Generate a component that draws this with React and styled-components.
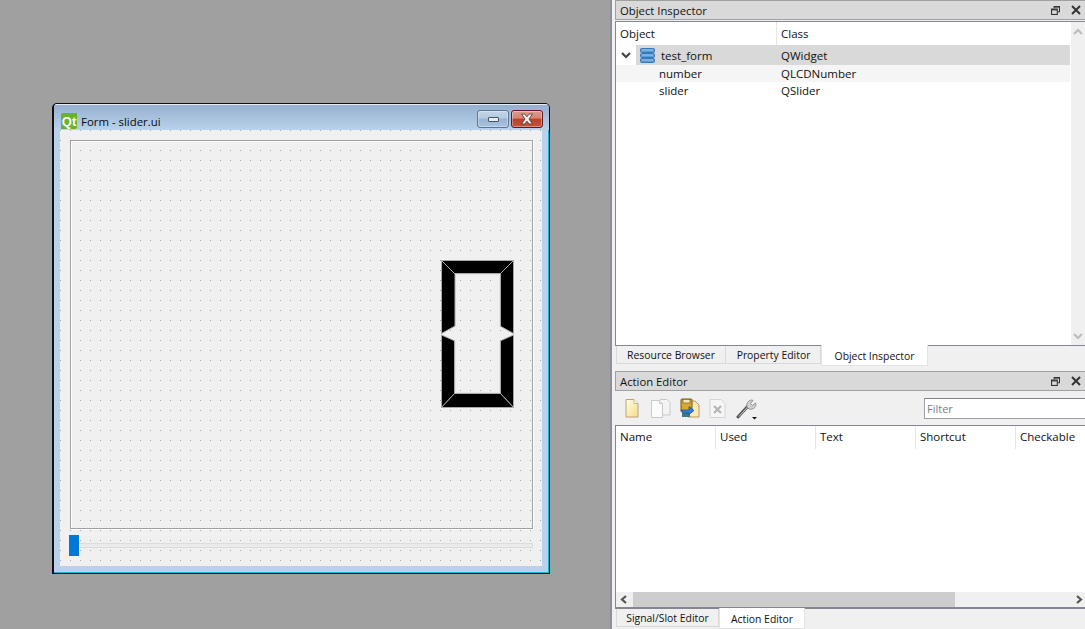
import React from "react";
import styled, { createGlobalStyle, css } from "styled-components";

const Global = createGlobalStyle`
  html, body { margin: 0; padding: 0; height: 100%; overflow: hidden; background: #a0a0a0; }
  #root { height: 100%; }
  * { box-sizing: border-box; }
`;

const Page = styled.div`
  display: grid;
  grid-template-columns: 610px 475px;
  width: 1085px;
  height: 629px;
  overflow: hidden;
  font-family: "Open Sans", "Noto Sans", sans-serif;
  font-size: 11.5px;
  color: #111;
`;

const Desktop = styled.main`
  position: relative;
  background: #a0a0a0;
`;

const Window = styled.section`
  position: absolute;
  left: 52px;
  top: 103px;
  width: 498px;
  height: 471px;
  display: flex;
  flex-direction: column;
  padding: 0 1px 1px 1px;
  border: 1px solid #101010;
  border-left-width: 2px;
  border-radius: 5px 5px 0 0;
  background: #b9d1ea;
  box-shadow: inset -1px -1px 0 #17b5d8;
  overflow: hidden;
`;

const TitleBar = styled.header`
  display: flex;
  align-items: flex-start;
  height: 26px;
  margin: 0 -1px;
  padding: 5px 6px 0 7px;
  border-top: 1px solid #e4ecf4;
  background: linear-gradient(#95b1cf, #bad2eb);
`;

const QtLogo = styled.span`
  display: flex;
  align-items: center;
  justify-content: center;
  width: 16px;
  height: 16px;
  margin-top: 3px;
  background: #67b32b;
  border-radius: 2px 0 2px 0;
  color: #fff;
  font: bold 13px "Liberation Sans", sans-serif;
`;

const WindowTitle = styled.span`
  flex: 1;
  margin: 4px 0 0 4px;
  font-size: 11.4px;
  line-height: 16px;
  color: #0a0a0a;
`;

const CaptionButton = styled.button`
  display: flex;
  align-items: center;
  justify-content: center;
  width: 32px;
  height: 18px;
  margin: 0 0 0 ${(p) => (p.$close ? 2 : 0)}px;
  padding: 0;
  border-radius: 3px;
  border: 1px solid ${(p) => (p.$close ? "#5c1a2c" : "#5f7491")};
  background: ${(p) =>
    p.$close
      ? "linear-gradient(#dc9c8c 0, #d58470 45%, #b8412a 50%, #c4553b 100%)"
      : "linear-gradient(#c3d5e8 0, #b4cae0 45%, #99b4d2 50%, #a8c2de 100%)"};
  box-shadow: inset 0 0 0 1px rgba(255, 255, 255, 0.35);
`;

const MinGlyph = styled.span`
  width: 11px;
  height: 5px;
  margin-top: 1px;
  background: #e8edf2;
  border: 1px solid #44546a;
  border-radius: 1px;
`;

const Client = styled.div`
  flex: 1;
  display: flex;
  flex-direction: column;
  margin: 0 6px 6px 5px;
  padding: 10px 9px 10px 9px;
  background-color: #f0f0f0;
  background-image: conic-gradient(at 1px 1px, transparent 270deg, #a6a6a6 270deg);
  background-size: 10px 10px;
  background-position: 0 0;
`;

const LayoutFrame = styled.div`
  flex: 1;
  display: flex;
  align-items: center;
  justify-content: flex-end;
  margin-left: 1px;
  padding-right: 17px;
  border: 1px solid #a0a0a0;
  box-shadow: 1px 1px 0 #fff, inset 1px 1px 0 #fff;
`;

const Slider = styled.div`
  display: flex;
  align-items: flex-start;
  height: 21px;
  margin-top: 6px;
`;

const SliderHandle = styled.span`
  width: 10px;
  height: 21px;
  background: #0078d7;
`;

const SliderGroove = styled.span`
  flex: 1;
  height: 5px;
  margin-top: 8px;
  background: #e9ece9;
  border: 1px solid #d9dcd9;
  border-left: 0;
`;

const Side = styled.aside`
  display: flex;
  flex-direction: column;
  min-width: 0;
  overflow: hidden;
  padding-left: 3px;
  background: #f0f0f0;
  border-left: 2px solid #8e8e9a;
`;

const DockTitle = styled.header`
  display: flex;
  align-items: center;
  flex: none;
  height: 20px;
  padding: 0 0 0 4px;
  background: #d9d9d9;
  border: 1px solid #a0a0a0;
  border-width: 1px 0 1px 1px;
  font-size: 11.3px;
`;

const DockName = styled.span`
  flex: 1;
  margin-top: 1px;
`;

const DockButtons = styled.span`
  display: flex;
  align-items: center;
  gap: 11px;
  padding-right: 4px;
`;

const TreeFrame = styled.div`
  display: flex;
  flex: none;
  height: 325px;
  margin-top: 1px;
  border: 1px solid #828790;
  border-right: 0;
  background: #fff;
`;

const TreeBody = styled.div`
  flex: 1;
  min-width: 0;
  display: flex;
  flex-direction: column;
`;

const TreeRow = styled.div`
  display: grid;
  grid-template-columns: 161px 1fr;
  align-items: center;
  height: ${(p) => p.$h}px;
  background: ${(p) => p.$bg || "transparent"};
`;

const HeaderCell = styled.div`
  align-self: stretch;
  display: flex;
  align-items: center;
  padding: 0 0 1px 4px;
  border-right: 1px solid #e5e5e5;
`;

const Cell = styled.span`
  padding-left: ${(p) => p.$indent || 4}px;
`;

const RootCell = styled.div`
  display: flex;
  align-items: center;
  height: 100%;
`;

const Branch = styled.span`
  display: flex;
  align-items: center;
  justify-content: center;
  width: 20px;
  height: 100%;
  background: #fff;
`;

const RootItem = styled.div`
  flex: 1;
  display: flex;
  align-items: center;
  gap: 6px;
  height: 100%;
  padding-left: 4px;
`;

const VScroll = styled.div`
  display: flex;
  flex: none;
  flex-direction: column;
  justify-content: space-between;
  align-items: center;
  width: 15px;
  padding: 6px 0 4px;
  background: #f0f0f0;
  border-left: 1px solid #fff;
`;

const Tabs = styled.nav`
  display: flex;
  flex: none;
  align-items: flex-start;
  height: ${(p) => p.$h}px;
  padding-left: 1px;
`;

const Tab = styled.span`
  display: flex;
  align-items: center;
  justify-content: center;
  width: ${(p) => p.$w}px;
  font-size: 10.4px;
  ${(p) =>
    p.$active
      ? css`
          height: 21px;
          margin-top: -1px;
          padding-top: 1px;
          background: #fff;
          border: 1px solid #e3e3e3;
          border-top: 0;
        `
      : css`
          height: 18px;
          background: #f0f0f0;
          border: 1px solid #d9d9d9;
          border-top: 0;
          border-left-color: ${p.$first ? "#d9d9d9" : "transparent"};
        `}
`;

const Toolbar = styled.div`
  display: flex;
  flex: none;
  align-items: center;
  height: 34px;
  padding: 0 0 0 10px;
`;

const ToolIcon = styled.span`
  display: flex;
  width: ${(p) => p.$w}px;
  margin-right: ${(p) => p.$gap}px;
`;

const Filter = styled.div`
  width: 161px;
  height: 21px;
  margin-left: auto;
  padding: 2px 0 0 2px;
  background: #fff;
  border: 1px solid #9a9fa6;
  border-top-color: #7f848c;
  border-right: 0;
  color: #808080;
  font-size: 11px;
  line-height: 16px;
`;

const TableFrame = styled.div`
  display: flex;
  flex: none;
  flex-direction: column;
  height: 184px;
  background: #fff;
  border: 1px solid #828790;
  border-width: 1px 0 2px 1px;
`;

const TableHead = styled.div`
  display: flex;
  height: 23px;
  overflow: hidden;
`;

const HeadCol = styled.div`
  display: flex;
  flex: none;
  align-items: center;
  width: 100px;
  padding: 0 0 2px 4px;
  border-right: 1px solid #e5e5e5;
`;

const TableBody = styled.div`
  flex: 1;
`;

const HScroll = styled.div`
  display: flex;
  align-items: center;
  height: 15px;
  background: #f0f0f0;
`;

const ScrollEnd = styled.span`
  display: flex;
  flex: none;
  align-items: center;
  justify-content: center;
  width: ${(p) => p.$w}px;
  height: 100%;
`;

const ScrollThumb = styled.span`
  width: 322px;
  height: 100%;
  background: #cdcdcd;
`;

const ScrollRest = styled.span`
  flex: 1;
`;

const FloatIcon = () => (
  <svg width="9" height="9" viewBox="0 0 10 10" fill="none" stroke="#333" strokeWidth="1.2">
    <path d="M3.5 2.5V.6h6v5.8H7.5" />
    <path d="M3.5 1.2h6" />
    <rect x=".6" y="3.4" width="6.4" height="6" />
    <path d="M.6 4.2h6.4" strokeWidth="1.4" />
  </svg>
);

const CloseIcon = () => (
  <svg width="10" height="10" viewBox="0 0 10 10" stroke="#333" strokeWidth="2" fill="none">
    <path d="M1 1l8 8M9 1l-8 8" />
  </svg>
);

const Chevron = ({ d, color = "#bdbdbd" }) => (
  <svg width="10" height="9" viewBox="0 0 10 9" fill="none" stroke={color} strokeWidth="2.2">
    <path d={d} />
  </svg>
);

const WidgetIcon = () => (
  <svg width="15" height="15" viewBox="0 0 15 15">
    {[0, 5, 10].map((y) => (
      <g key={y}>
        <rect x=".5" y={y + 0.5} width="14" height="4" rx="1" fill="#5a9ad6" stroke="#3a78b5" />
        <rect x="2" y={y + 1.5} width="11" height="1" fill="#9cc8ee" />
      </g>
    ))}
  </svg>
);

const NewFileIcon = () => (
  <svg width="14" height="21" viewBox="0 0 14 21">
    <defs>
      <linearGradient id="nf" x1="0" x2="1" y1="0" y2="1">
        <stop offset="0" stopColor="#fffde2" />
        <stop offset="1" stopColor="#f4dc8a" />
      </linearGradient>
    </defs>
    <path d="M1 1.5h8l4 4v13.5H1z" fill="url(#nf)" stroke="#b9a277" />
    <path d="M9 1.5v4h4" fill="#fff" stroke="#c6b48c" />
  </svg>
);

const CopyIcon = () => (
  <svg width="21" height="21" viewBox="0 0 21 21" fill="#f4f4f4" stroke="#c9c9c9">
    <path d="M10 1.5h7l3 3v12.5H10z" />
    <path d="M1.5 2.5h8l3 3v14h-11z" fill="#fbfbfb" />
    <path d="M9.500 2.500v3h3" />
  </svg>
);

const OpenIcon = () => (
  <svg width="20" height="21" viewBox="0 0 20 21">
    <path d="M8 3h7l4 4v12H8z" fill="#fbe9b6" stroke="#b59a62" />
    <rect x="1" y="1" width="11" height="13" rx="1" fill="#d9a92f" stroke="#6e5a1e" />
    <rect x="3" y="1.500" width="7" height="3.500" fill="#f0e6c0" stroke="#6e5a1e" strokeWidth=".6" />
    <rect x="2" y="15" width="8" height="4" fill="#3a7a88" />
    <path d="M1 12h8V8.500l5 4-5 4V15H3z" fill="#2f7fd8" stroke="#1c4f96" strokeWidth=".7" />
  </svg>
);

const DeleteIcon = () => (
  <svg width="17" height="21" viewBox="0 0 17 21">
    <path d="M1 1.500h11l4 4v14H1z" fill="#f6f6f6" stroke="#d4d4d4" />
    <path d="M5 8l7 7M12 8l-7 7" stroke="#b5b5b5" strokeWidth="2.200" fill="none" />
  </svg>
);

const WrenchIcon = () => (
  <svg width="23" height="23" viewBox="0 0 23 23" fill="none">
    <path d="M2 20L12 9" stroke="#555" strokeWidth="3" strokeLinecap="round" />
    <path d="M3 19.500L12 9.500" stroke="#c8c8c8" strokeWidth="1" />
    <path d="M11 10c-1-3 1-7 5-7l1 .5-2.500 3 2 2 3-2.500.5 1c0 4-4 6-7 5z" fill="#cfcfcf" stroke="#808080" strokeWidth=".8" />
    <path d="M16 20h5l-2.500 2.500z" fill="#111" />
  </svg>
);

const CloseGlyph = () => (
  <svg width="16" height="12" viewBox="0 0 14 11">
    <path d="M2 1h3l2 2.500L9 1h3L8.800 5.500 12 10H9L7 7.500 5 10H2l3.200-4.500z" fill="#f2f2f2" stroke="#4a2a2a" strokeWidth=".7" />
  </svg>
);

const LcdDigit = () => (
  <svg width="74" height="149" viewBox="441 261 74 149" fill="#000" stroke="#a8a8a8" strokeWidth="1">
    <polygon points="441.500,261.500 513.500,261.500 500,275 455,275" />
    <polygon points="441.500,261.500 455,275 455,327 441.500,334.500" />
    <polygon points="513.500,261.500 500,275 500,327 513.500,334.500" />
    <polygon points="441.500,336 455,342 455,394 441.500,408.500" />
    <polygon points="513.500,336 500,342 500,394 513.500,408.500" />
    <polygon points="441.500,408.500 455,394 500,394 513.500,408.500" />
    <path d="M455 275H500V327M455 342V394H500V342" stroke="#fff" fill="none" />
  </svg>
);

const ActionColumns = ["Name", "Used", "Text", "Shortcut", "Checkable"];

export default function App() {
  return (
    <Page>
      <Global />
      <Desktop>
        <Window>
          <TitleBar>
            <QtLogo>Qt</QtLogo>
            <WindowTitle>Form - slider.ui</WindowTitle>
            <CaptionButton aria-label="Minimize"><MinGlyph /></CaptionButton>
            <CaptionButton $close aria-label="Close"><CloseGlyph /></CaptionButton>
          </TitleBar>
          <Client>
            <LayoutFrame><LcdDigit /></LayoutFrame>
            <Slider>
              <SliderHandle />
              <SliderGroove />
            </Slider>
          </Client>
        </Window>
      </Desktop>
      <Side>
        <DockTitle>
          <DockName>Object Inspector</DockName>
          <DockButtons><FloatIcon /><CloseIcon /></DockButtons>
        </DockTitle>
        <TreeFrame>
          <TreeBody>
            <TreeRow $h={23}>
              <HeaderCell>Object</HeaderCell>
              <Cell>Class</Cell>
            </TreeRow>
            <TreeRow $h={20} $bg="#d9d9d9">
              <RootCell>
                <Branch><Chevron d="M1 2l4 4 4-4" color="#444" /></Branch>
                <RootItem><WidgetIcon />test_form</RootItem>
              </RootCell>
              <Cell>QWidget</Cell>
            </TreeRow>
            <TreeRow $h={17} $bg="#f5f5f5">
              <Cell $indent={43}>number</Cell>
              <Cell>QLCDNumber</Cell>
            </TreeRow>
            <TreeRow $h={17}>
              <Cell $indent={43}>slider</Cell>
              <Cell>QSlider</Cell>
            </TreeRow>
          </TreeBody>
          <VScroll>
            <Chevron d="M1 6l4-4 4 4" />
            <Chevron d="M1 2l4 4 4-4" />
          </VScroll>
        </TreeFrame>
        <Tabs $h={25}>
          <Tab $w={110} $first>Resource Browser</Tab>
          <Tab $w={95}>Property Editor</Tab>
          <Tab $w={107} $active>Object Inspector</Tab>
        </Tabs>
        <DockTitle>
          <DockName>Action Editor</DockName>
          <DockButtons><FloatIcon /><CloseIcon /></DockButtons>
        </DockTitle>
        <Toolbar>
          <ToolIcon $w={14} $gap={11}><NewFileIcon /></ToolIcon>
          <ToolIcon $w={21} $gap={9}><CopyIcon /></ToolIcon>
          <ToolIcon $w={20} $gap={9}><OpenIcon /></ToolIcon>
          <ToolIcon $w={17} $gap={10}><DeleteIcon /></ToolIcon>
          <ToolIcon $w={23} $gap={0}><WrenchIcon /></ToolIcon>
          <Filter>Filter</Filter>
        </Toolbar>
        <TableFrame>
          <TableHead>
            {ActionColumns.map((c) => <HeadCol key={c}>{c}</HeadCol>)}
          </TableHead>
          <TableBody />
          <HScroll>
            <ScrollEnd $w={17}><Chevron d="M6 1L2 4.500 6 8" color="#555" /></ScrollEnd>
            <ScrollThumb />
            <ScrollRest />
            <ScrollEnd $w={12}><Chevron d="M3 1l4 3.500L3 8" color="#555" /></ScrollEnd>
          </HScroll>
        </TableFrame>
        <Tabs $h={20}>
          <Tab $w={103} $first>Signal/Slot Editor</Tab>
          <Tab $w={86} $active>Action Editor</Tab>
        </Tabs>
      </Side>
    </Page>
  );
}
